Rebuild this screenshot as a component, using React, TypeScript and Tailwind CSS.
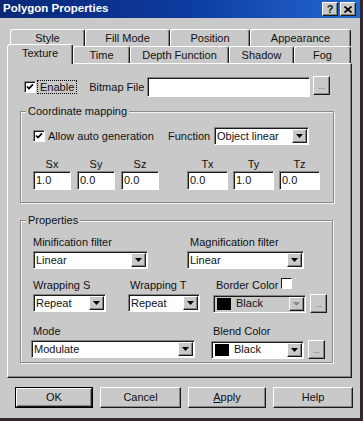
import React from "react";

const raised =
  "border border-t-white border-l-white border-r-[#1a1a1a] border-b-[#1a1a1a] shadow-[inset_-1px_-1px_0_#858585]";
const sunken =
  "border border-t-[#858585] border-l-[#858585] border-r-white border-b-white shadow-[inset_1px_1px_0_#1a1a1a]";

function Arrow({ disabled }: { disabled?: boolean }) {
  return (
    <div className={`w-[15px] h-[14px] mr-[1px] bg-[#c9c9c9] flex items-center justify-center ${raised}`}>
      <svg width="7" height="4" viewBox="0 0 7 4">
        <polygon points="0,0 7,0 3.5,4" fill={disabled ? "#8a8a8a" : "#000"} />
      </svg>
    </div>
  );
}

function Combo({
  className,
  text,
  swatch,
  disabled,
}: {
  className: string;
  text: string;
  swatch?: boolean;
  disabled?: boolean;
}) {
  return (
    <div
      className={`h-[18px] flex items-center ${sunken} ${disabled ? "bg-[#c9c9c9]" : "bg-white"} ${className}`}
    >
      {swatch && <div className="w-[14px] h-[12px] bg-black ml-[3px] mr-[5px]" />}
      <span className={`flex-1 leading-none ${swatch ? "" : "pl-[2px]"}`}>{text}</span>
      <Arrow disabled={disabled} />
    </div>
  );
}

function Check({ checked }: { checked?: boolean }) {
  return (
    <div className={`w-[12px] h-[12px] bg-white flex items-center justify-center ${sunken}`}>
      {checked && (
        <svg width="8" height="8" viewBox="0 0 8 8">
          <path d="M1 3.5 L3 5.6 L7 1.3" stroke="#000" strokeWidth="1.7" fill="none" />
        </svg>
      )}
    </div>
  );
}

function TextBox({ className, value }: { className: string; value?: string }) {
  return (
    <div className={`h-[19px] bg-white flex items-center pl-[2px] leading-none ${sunken} ${className}`}>
      {value}
    </div>
  );
}

function Dots({ className }: { className?: string }) {
  return (
    <div className={`w-[17px] h-[19px] bg-[#c9c9c9] flex items-end justify-center pb-[3px] ${raised} ${className ?? ""}`}>
      <span className="text-[8px] leading-none text-[#555]">...</span>
    </div>
  );
}

function Group({
  label,
  className,
  children,
}: {
  label: string;
  className: string;
  children: React.ReactNode;
}) {
  return (
    <div
      className={`relative border border-[#8a8a8a] shadow-[1px_1px_0_#f4f4f4,inset_1px_1px_0_#f4f4f4] ${className}`}
    >
      <span className="absolute -top-[8px] left-[5px] px-[2px] bg-[#c9c9c9] leading-[14px]">{label}</span>
      {children}
    </div>
  );
}

function Tab({ label, className }: { label: string; className: string }) {
  return (
    <div
      className={`h-[17px] flex items-center justify-center bg-[#c9c9c9] border-t border-l border-white border-r border-r-[#1a1a1a] shadow-[inset_-1px_0_0_#858585] rounded-t-[3px] ${className}`}
    >
      {label}
    </div>
  );
}

function Btn({ label, className, def }: { label: React.ReactNode; className: string; def?: boolean }) {
  if (def) {
    return (
      <div className={`h-[21px] border border-black ${className}`}>
        <div className={`w-full h-full flex items-center justify-center bg-[#c9c9c9] ${raised}`}>{label}</div>
      </div>
    );
  }
  return (
    <div className={`h-[21px] flex items-center justify-center bg-[#c9c9c9] ${raised} ${className}`}>{label}</div>
  );
}

function Field({ label, value, w }: { label: string; value: string; w: string }) {
  return (
    <div className={`flex flex-col items-center ${w}`}>
      <span className="h-[13px] leading-[13px]">{label}</span>
      <TextBox className="w-full" value={value} />
    </div>
  );
}

export default function App() {
  return (
    <div className="w-[363px] h-[421px] bg-[#3a2430] overflow-hidden font-['Liberation_Sans',Arial,sans-serif] text-[11px] text-[#111]">
      <div className="w-[361px] h-[419px] bg-[#c9c9c9] border-r border-b border-[#2a2a2a] flex flex-col">
        {/* Title bar */}
        <div className="h-[18px] flex items-center justify-between pl-[3px] pr-[4px] bg-gradient-to-r from-[#0a2878] via-[#0c3a9e] to-[#2468d0]">
          <span className="text-white font-bold text-[11.5px] leading-none">Polygon Properties</span>
          <div className="flex gap-[2px]">
            <div className={`w-[16px] h-[14px] bg-[#c9c9c9] flex items-center justify-center font-bold text-[11px] leading-none ${raised}`}>
              ?
            </div>
            <div className={`w-[16px] h-[14px] bg-[#c9c9c9] flex items-center justify-center ${raised}`}>
              <svg width="8" height="7" viewBox="0 0 8 7">
                <path d="M0.5 0.5 L7.5 6.5 M7.5 0.5 L0.5 6.5" stroke="#000" strokeWidth="1.8" />
              </svg>
            </div>
          </div>
        </div>

        {/* Tabs row 1 */}
        <div className="flex ml-[10px] mt-[11px]">
          <Tab label="Style" className="w-[75px]" />
          <Tab label="Fill Mode" className="w-[85px]" />
          <Tab label="Position" className="w-[80px]" />
          <Tab label="Appearance" className="w-[101px]" />
        </div>
        {/* Tabs row 2 */}
        <div className="flex items-end ml-[7px] h-[17px]">
          <div className="relative top-[1px] z-10 w-[66px] h-[20px] flex items-center justify-center bg-[#c9c9c9] border-t border-l border-white border-r border-r-[#1a1a1a] shadow-[inset_-1px_0_0_#858585] rounded-t-[3px] pb-[2px]">
            Texture
          </div>
          <Tab label="Time" className="w-[57px]" />
          <Tab label="Depth Function" className="w-[99px]" />
          <Tab label="Shadow" className="w-[65px]" />
          <Tab label="Fog" className="w-[57px]" />
        </div>

        {/* Panel */}
        <div className={`ml-[7px] w-[345px] h-[315px] flex flex-col pt-[13px] ${raised}`}>
          {/* Enable row */}
          <div className="flex items-center h-[20px]">
            <div className="ml-[16px]">
              <Check checked />
            </div>
            <span className="ml-[1px] px-[2px] border border-dotted border-black leading-[12px]">Enable</span>
            <span className="ml-[12px] w-[58px]">Bitmap File</span>
            <TextBox className="w-[163px] h-[20px]" />
            <Dots className="ml-[3px] self-start -mt-[1px]" />
          </div>

          {/* Coordinate mapping */}
          <Group label="Coordinate mapping" className="ml-[12px] mt-[14px] w-[314px] h-[92px] pt-[15px]">
            <div className="flex items-center h-[18px]">
              <div className="ml-[12px] w-[135px] flex items-center">
                <Check checked />
                <span className="ml-[3px]">Allow auto generation</span>
              </div>
              <span className="w-[46px]">Function</span>
              <Combo className="w-[95px]" text="Object linear" />
            </div>
            <div className="flex mt-[13px]">
              <div className="ml-[12px] flex gap-[6px]">
                <Field label="Sx" value="1.0" w="w-[38px]" />
                <Field label="Sy" value="0.0" w="w-[38px]" />
                <Field label="Sz" value="0.0" w="w-[38px]" />
              </div>
              <div className="ml-[28px] flex gap-[5px]">
                <Field label="Tx" value="0.0" w="w-[41px]" />
                <Field label="Ty" value="1.0" w="w-[41px]" />
                <Field label="Tz" value="0.0" w="w-[41px]" />
              </div>
            </div>
          </Group>

          {/* Properties */}
          <Group label="Properties" className="ml-[12px] mt-[17px] w-[313px] h-[143px] pt-[14px]">
            <div className="flex">
              <div className="ml-[12px] w-[115px] flex flex-col">
                <span className="h-[14px] leading-[14px]">Minification filter</span>
                <Combo className="w-full mt-[2px]" text="Linear" />
              </div>
              <div className="ml-[39px] w-[117px] flex flex-col">
                <span className="h-[14px] leading-[14px] pl-[3px]">Magnification filter</span>
                <Combo className="w-full mt-[2px]" text="Linear" />
              </div>
            </div>
            <div className="flex mt-[9px]">
              <div className="ml-[12px] w-[73px] flex flex-col">
                <span className="h-[14px] leading-[14px]">Wrapping S</span>
                <Combo className="w-full mt-[2px]" text="Repeat" />
              </div>
              <div className="ml-[22px] w-[72px] flex flex-col">
                <span className="h-[14px] leading-[14px] pl-[2px]">Wrapping T</span>
                <Combo className="w-full mt-[2px]" text="Repeat" />
              </div>
              <div className="ml-[13px] flex flex-col">
                <div className="h-[14px] flex items-center pl-[3px]">
                  <span className="leading-[14px]">Border Color</span>
                  <div className="ml-[3px] -mt-[3px] w-[11px] h-[11px] bg-white border border-t-[#1a1a1a] border-l-[#1a1a1a] border-r-white border-b-white" />
                </div>
                <div className="flex items-center mt-[2px]">
                  <Combo className="w-[93px]" text="Black" swatch disabled />
                  <Dots className="ml-[4px] w-[16px]" />
                </div>
              </div>
            </div>
            <div className="flex mt-[11px]">
              <div className="ml-[10px] w-[164px] flex flex-col">
                <span className="h-[14px] leading-[14px] pl-[2px]">Mode</span>
                <Combo className="w-full mt-[2px]" text="Modulate" />
              </div>
              <div className="ml-[16px] flex flex-col">
                <span className="h-[14px] leading-[14px] pl-[2px]">Blend Color</span>
                <div className="flex items-center mt-[2px]">
                  <Combo className="w-[93px]" text="Black" swatch />
                  <Dots className="ml-[4px] w-[16px]" />
                </div>
              </div>
            </div>
          </Group>
        </div>

        {/* Buttons */}
        <div className="flex ml-[15px] mt-[9px] gap-[7px]">
          <Btn def label="OK" className="w-[78px]" />
          <Btn label="Cancel" className="w-[81px]" />
          <Btn
            label={
              <span>
                <span className="underline">A</span>pply
              </span>
            }
            className="w-[78px]"
          />
          <Btn label="Help" className="w-[80px]" />
        </div>
      </div>
    </div>
  );
}
